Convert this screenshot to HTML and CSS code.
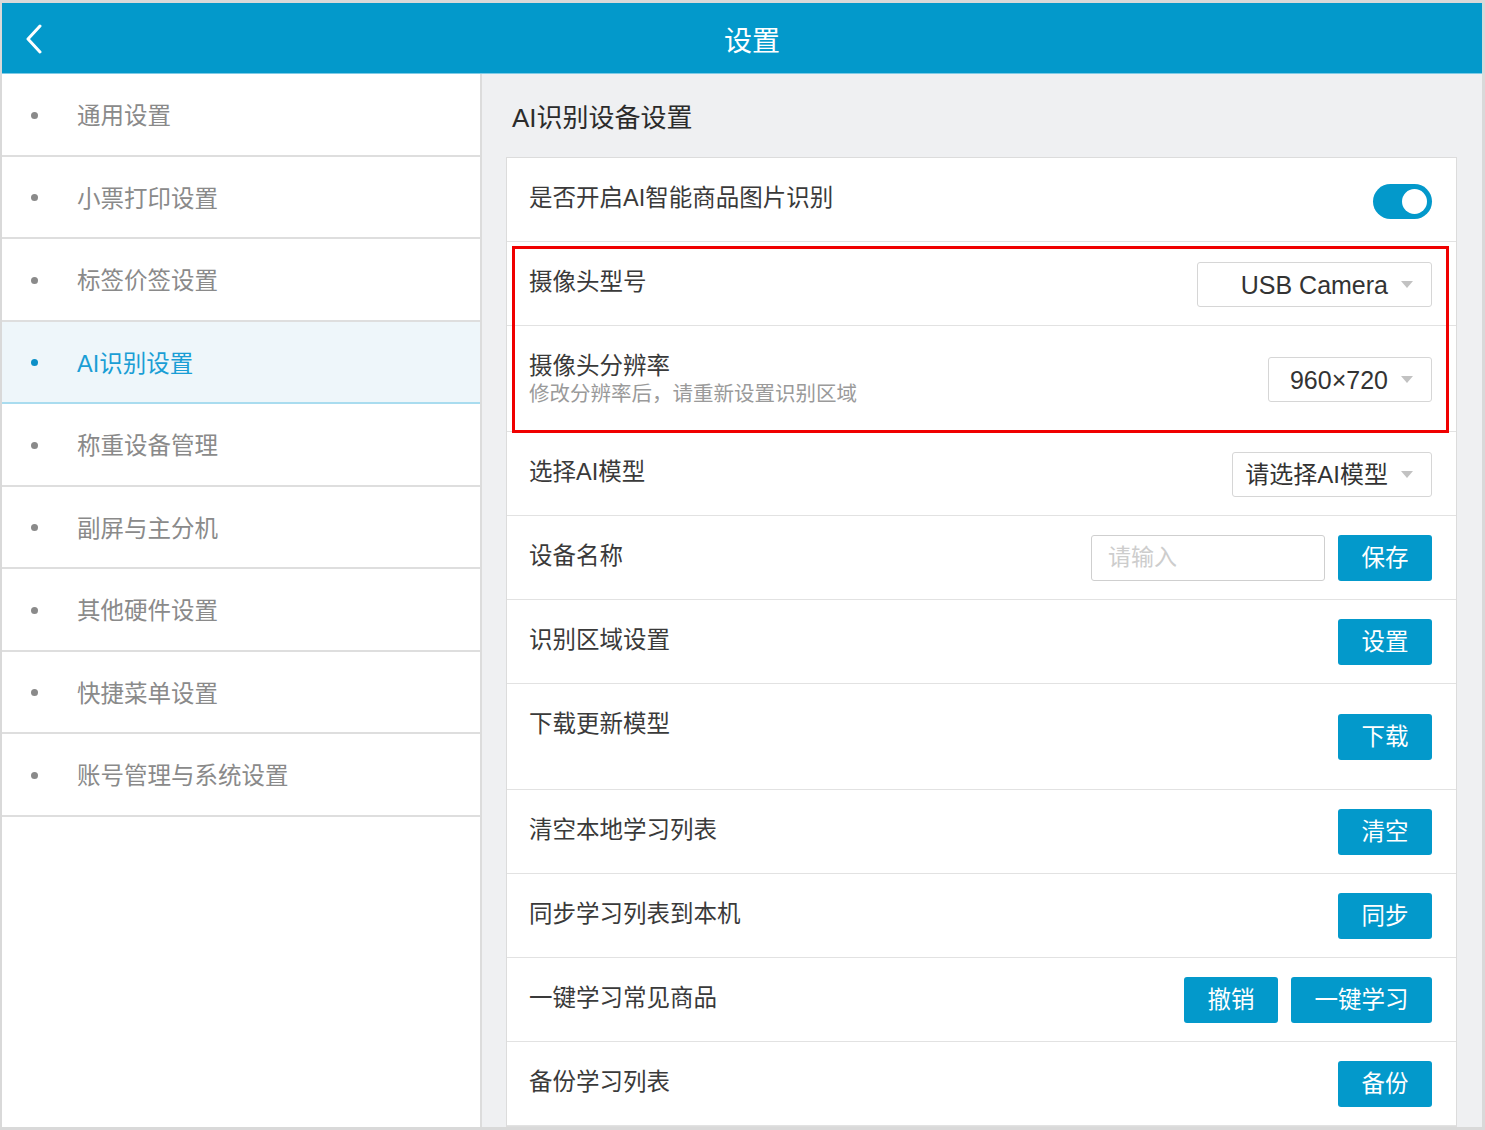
FILE: index.html
```html
<!DOCTYPE html>
<html lang="zh-CN">
<head>
  <meta charset="UTF-8">
  <meta name="viewport" content="width=device-width, initial-scale=1.0">
  <title>设置</title>
  <link rel="stylesheet" href="styles.css">
</head>
<body>
  <div class="app">
    <header class="topbar">
      <a class="back" href="#">
        <svg width="18" height="30" viewBox="0 0 18 30"><polyline points="15,2 3,15 15,28" fill="none" stroke="#fff" stroke-width="3" stroke-linecap="round" stroke-linejoin="round"/></svg>
      </a>
      <h1>设置</h1>
    </header>

    <div class="main">
      <ul class="sidebar">
        <li><span class="dot"></span>通用设置</li>
        <li><span class="dot"></span>小票打印设置</li>
        <li><span class="dot"></span>标签价签设置</li>
        <li class="active"><span class="dot"></span>AI识别设置</li>
        <li><span class="dot"></span>称重设备管理</li>
        <li><span class="dot"></span>副屏与主分机</li>
        <li><span class="dot"></span>其他硬件设置</li>
        <li><span class="dot"></span>快捷菜单设置</li>
        <li><span class="dot"></span>账号管理与系统设置</li>
      </ul>

      <div class="content">
        <h2>AI识别设备设置</h2>
        <div class="card">
          <div class="row">
            <div class="label">是否开启AI智能商品图片识别</div>
            <div class="switch on"><span class="knob"></span></div>
          </div>

          <div class="highlight">
            <div class="row">
              <div class="label">摄像头型号</div>
              <div class="select select-camera"><span>USB Camera</span><i class="caret"></i></div>
            </div>
            <div class="row row-tall">
              <div class="label-group">
                <div class="label">摄像头分辨率</div>
                <div class="desc">修改分辨率后，请重新设置识别区域</div>
              </div>
              <div class="select select-res"><span>960×720</span><i class="caret"></i></div>
            </div>
          </div>

          <div class="row">
            <div class="label">选择AI模型</div>
            <div class="select select-model"><span>请选择AI模型</span><i class="caret"></i></div>
          </div>
          <div class="row">
            <div class="label">设备名称</div>
            <div class="actions">
              <input class="text-input" type="text" placeholder="请输入">
              <button class="btn">保存</button>
            </div>
          </div>
          <div class="row">
            <div class="label">识别区域设置</div>
            <button class="btn">设置</button>
          </div>
          <div class="row row-tall">
            <div class="label-group">
              <div class="label">下载更新模型</div>
              <div class="desc"></div>
            </div>
            <button class="btn">下载</button>
          </div>
          <div class="row">
            <div class="label">清空本地学习列表</div>
            <button class="btn">清空</button>
          </div>
          <div class="row">
            <div class="label">同步学习列表到本机</div>
            <button class="btn">同步</button>
          </div>
          <div class="row">
            <div class="label">一键学习常见商品</div>
            <div class="actions">
              <button class="btn">撤销</button>
              <button class="btn">一键学习</button>
            </div>
          </div>
          <div class="row">
            <div class="label">备份学习列表</div>
            <button class="btn">备份</button>
          </div>
        </div>
      </div>
    </div>
  </div>
</body>
</html>
```

FILE: styles.css
```css
body {
  margin: 0;
  padding: 0;
  background-color: #d9d9d9;
  font-family: "Liberation Sans", "Noto Sans CJK SC", sans-serif;
  color: #333;
}

.app {
  margin: 3px 3px 0 2px;
  height: 1124px;
  overflow: hidden;
  display: flex;
  flex-direction: column;
  background-color: #fff;
}

/* top bar */
.topbar {
  height: 70px;
  flex: none;
  background-color: #0399cb;
  border-bottom: 1px solid #7fcbe6;
  display: flex;
  align-items: center;
  position: relative;
}

.back {
  display: flex;
  margin-left: 23px;
  margin-top: 1px;
}

.topbar h1 {
  position: absolute;
  left: 0;
  right: 0;
  top: 19px;
  margin: 0;
  padding-left: 20px;
  text-align: center;
  font-size: 28px;
  font-weight: normal;
  color: #fff;
  line-height: 40px;
  pointer-events: none;
}

.main {
  flex: 1;
  display: flex;
  min-height: 0;
}

/* left menu */
.sidebar {
  list-style: none;
  margin: 0;
  padding: 0;
  width: 478px;
  flex: none;
  background-color: #fff;
  border-right: 2px solid #dcdcdc;
}

.sidebar li {
  box-sizing: border-box;
  height: 82.5px;
  padding-top: 4px;
  border-bottom: 2px solid #dedede;
  display: flex;
  align-items: center;
  padding-left: 29px;
  font-size: 23.5px;
  color: #8a8a8a;
  line-height: 30px;
}

.sidebar .dot {
  width: 7px;
  height: 7px;
  border-radius: 50%;
  background-color: #8a8a8a;
  margin-right: 39px;
  margin-top: -2px;
}

.sidebar li.active {
  background-color: #eef6fa;
  border-bottom-color: #a9dcef;
  color: #1a9ed5;
}

.sidebar li.active .dot {
  background-color: #0b8fc7;
}

/* right side */
.content {
  flex: 1;
  background-color: #eff0f2;
  padding: 0 25px 0 24px;
  overflow: hidden;
}

.content h2 {
  margin: 26px 0 21px 6px;
  font-size: 26px;
  font-weight: normal;
  line-height: 36px;
  color: #2b2b2b;
}

.card {
  background-color: #fff;
  border: 1px solid #dcdcdc;
}

.row {
  height: 83px;
  border-bottom: 1px solid #e2e2e2;
  display: flex;
  align-items: center;
  justify-content: space-between;
  padding: 0 24px 0 22px;
}

.row-tall {
  height: 105px;
}

.label {
  font-size: 23.5px;
  line-height: 30px;
  color: #3a3a3a;
  margin-top: -4px;
}

.label-group .label {
  margin-top: 0;
}

.desc {
  font-size: 20.5px;
  line-height: 26px;
  height: 26px;
  color: #9a9a9a;
}

.highlight {
  position: relative;
}

.highlight::after {
  content: "";
  position: absolute;
  top: 4px;
  left: 5px;
  right: 7px;
  bottom: -1px;
  border: 3px solid #f00000;
  pointer-events: none;
}

/* switch */
.switch {
  width: 59px;
  height: 35px;
  border-radius: 18px;
  background-color: #ccc;
  position: relative;
  margin-top: 4px;
}

.switch.on {
  background-color: #0399cb;
}

.switch .knob {
  position: absolute;
  top: 5px;
  right: 5px;
  width: 25px;
  height: 25px;
  border-radius: 50%;
  background-color: #fff;
}

/* select */
.select {
  border: 1px solid #d6d6d6;
  border-radius: 3px;
  box-sizing: border-box;
  height: 45px;
  display: flex;
  align-items: center;
  justify-content: flex-end;
  padding-right: 18px;
  font-size: 25px;
  color: #333;
  margin-top: 2px;
}

.select span {
  margin-right: 13px;
  line-height: 30px;
}

.select-model {
  font-size: 24px;
}

.select-camera { width: 235px; }
.select-res { width: 164px; }
.select-model { width: 200px; }

.caret {
  width: 0;
  height: 0;
  border-left: 6px solid transparent;
  border-right: 6px solid transparent;
  border-top: 7px solid #c2c2c2;
}

/* inputs and buttons */
.actions {
  display: flex;
  gap: 13px;
}

.text-input {
  width: 234px;
  height: 46px;
  box-sizing: border-box;
  border: 1px solid #cfcfcf;
  border-radius: 3px;
  padding: 0 16px;
  font-family: "Liberation Sans", "Noto Sans CJK SC", sans-serif;
  font-size: 23px;
  color: #333;
  outline: none;
}

.text-input::placeholder {
  color: #cdcdcd;
}

.btn {
  height: 46px;
  padding: 0 23.5px;
  border: none;
  border-radius: 3px;
  background-color: #0399cb;
  color: #fff;
  font-family: "Liberation Sans", "Noto Sans CJK SC", sans-serif;
  font-size: 23.5px;
  line-height: 30px;
  cursor: pointer;
}
```
